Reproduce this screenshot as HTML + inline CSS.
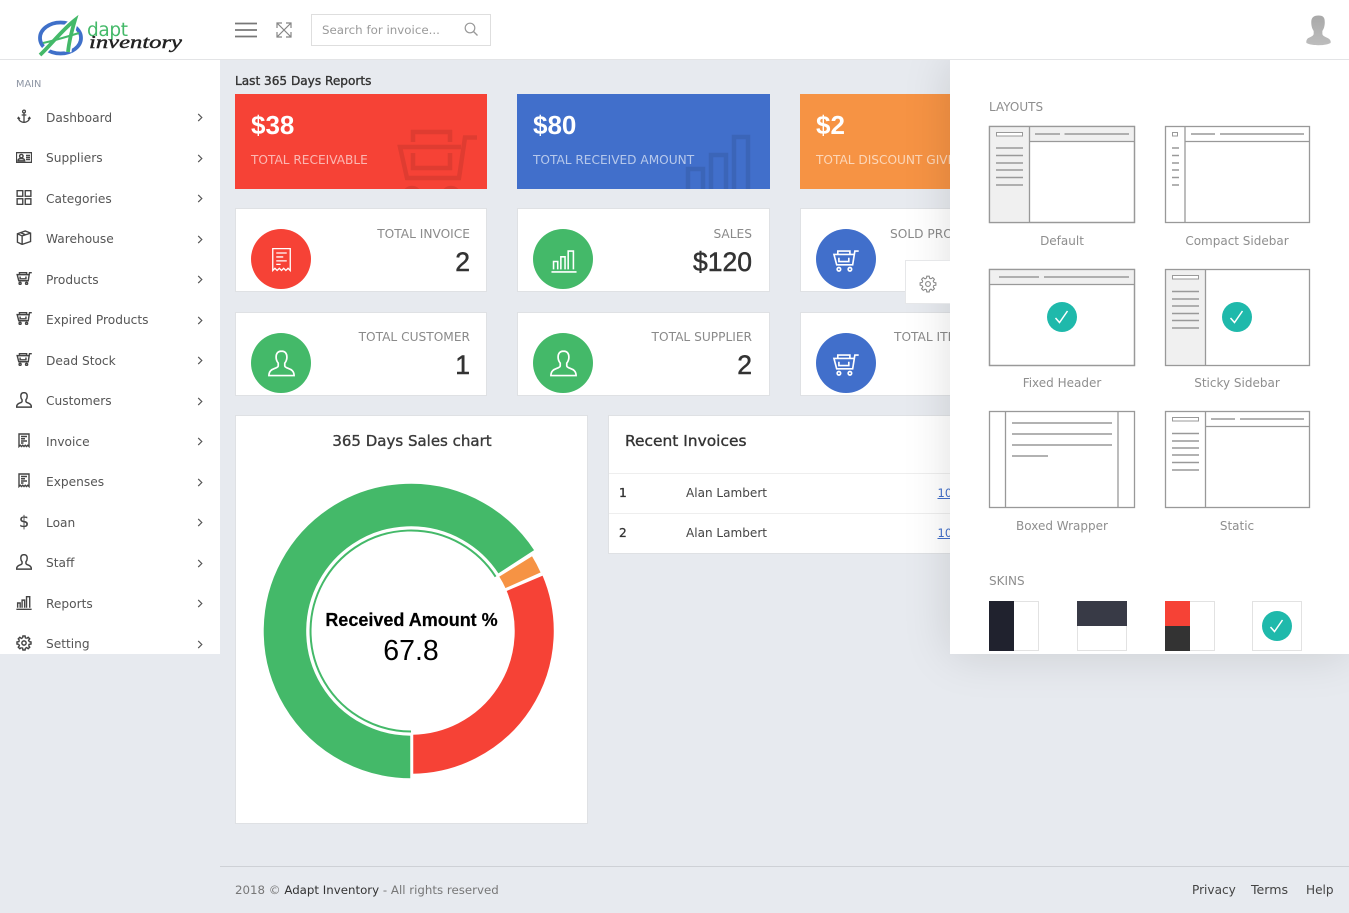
<!DOCTYPE html>
<html lang="en"><head><meta charset="utf-8"><title>Adapt Inventory</title>
<style>
html,body{margin:0;padding:0;width:1349px;height:913px;overflow:hidden;background:#e7eaef}
body{position:relative;font-family:"DejaVu Sans","Liberation Sans",sans-serif;font-size:12.2px;color:#555}
.a,.t{position:absolute}
.t{white-space:nowrap;line-height:20px;height:20px;margin-top:1px}
.r{text-align:right}
.c{text-align:center;width:200px}
.card{position:absolute;box-sizing:border-box;background:#fff;border:1px solid #dfe1e4;}
.solid{position:absolute;top:94px;height:95px;overflow:hidden}
.big{font:bold 26px/30px "Liberation Sans",sans-serif;color:#fff;position:absolute;left:16px;top:16px}
.lab{position:absolute;left:16px;top:56px;color:rgba(255,255,255,.62);white-space:nowrap;line-height:20px;font-size:12.15px}
.circ{position:absolute;width:60px;height:60px;border-radius:50%}
.ul{color:#8a8a8a;font-size:12.2px}
.num{font:26.5px/30px "Liberation Sans",sans-serif;color:#333;-webkit-text-stroke:.5px #333}
.nav{color:#555}
svg{display:block;overflow:visible}
.ic{position:absolute;fill:none;stroke:currentColor;stroke-width:1.5}
.nav .ic{stroke-width:2.2;color:#444}
.pl{color:#8e8e8e;font-size:12px}
</style></head><body>
<svg width="0" height="0" style="position:absolute">
<defs>
<symbol id="anchor" viewBox="0 0 24 24"><g fill="none" stroke="currentColor"><circle cx="12" cy="3.500" r="2.400"/><path d="M12 6v16M8 9.500h8M2.500 13.500c0 5 4 8.500 9.500 8.500s9.500-3.500 9.500-8.500M1 16l1.500-2.500L5 16M19 16l2.500-2.500L23 16"/></g></symbol>
<symbol id="idcard" viewBox="0 0 24 16"><g fill="none" stroke="currentColor"><rect x=".6" y=".6" width="22.800" height="14.800"/><circle cx="8" cy="6" r="2.600"/><path d="M3 13c0-2.500 2-3.500 5-3.500s5 1 5 3.500zM15 5h6M15 8h6M15 11h6"/></g></symbol>
<symbol id="grid" viewBox="0 0 24 24"><g fill="none" stroke="currentColor"><rect x="1" y="1" width="9" height="9"/><rect x="14" y="1" width="9" height="9"/><rect x="1" y="14" width="9" height="9"/><rect x="14" y="14" width="9" height="9"/></g></symbol>
<symbol id="box" viewBox="0 0 24 24"><g fill="none" stroke="currentColor"><path d="M1.500 6L14 1.500 22.500 5v13.500L9 23 1.500 19.500zM1.500 6L9 9.500 22.500 5M9 9.500V23M6 4l8 3.500"/></g></symbol>
<symbol id="cart" viewBox="0 0 24 20"><g fill="none" stroke="currentColor"><path d="M24 1h-3.500l-2 12.500H4L1.500 4H19.500M5 4V1h11v3M6 7v3.500h9V7"/><circle cx="6" cy="17.500" r="1.600"/><circle cx="16" cy="17.500" r="1.600"/></g></symbol>
<symbol id="user" viewBox="0 0 24 24"><path fill="none" stroke="currentColor" d="M12 1C8.700 1 7.200 3.200 7.200 6.300c0 2.300.8 4 1.900 5.400v2.300c0 1-1.100 1.700-3.200 2.400C3 17.400.9 18.800.8 22.700h22.400c-.1-3.900-2.200-5.300-5.100-6.300-2.100-.7-3.200-1.400-3.200-2.400v-2.300c1.100-1.400 1.900-3.100 1.900-5.400C16.800 3.200 15.300 1 12 1z"/></symbol>
<symbol id="receipt" viewBox="0 0 24 28"><g fill="none" stroke="currentColor"><path d="M2 1h20v25l-2.500-2.500L17 26l-2.500-2.500L12 26l-2.500-2.500L7 26l-2.500-2.500L2 26z"/><path d="M6 6h12M6 10.500h8M6 15h12M6 19h5"/></g></symbol>
<symbol id="chart" viewBox="0 0 24 22"><g fill="none" stroke="currentColor"><path d="M0 21h24M2 18.500V11h4v7.500M9 18.500V6.500h4v12M16 18.500V1h5v17.500"/></g></symbol>
<symbol id="gear" viewBox="0 0 24 24"><g fill="none" stroke="currentColor"><circle cx="12" cy="12" r="3.200"/>
<path d="M9.900 4.300L10.400 1.500H13.600L14.100 4.300L15.960 5.070"/>
<path transform="rotate(45 12 12)" d="M9.900 4.300L10.400 1.500H13.600L14.100 4.300L15.960 5.070"/>
<path transform="rotate(90 12 12)" d="M9.900 4.300L10.400 1.500H13.600L14.100 4.300L15.960 5.070"/>
<path transform="rotate(135 12 12)" d="M9.900 4.300L10.400 1.500H13.600L14.100 4.300L15.960 5.070"/>
<path transform="rotate(180 12 12)" d="M9.900 4.300L10.400 1.500H13.600L14.100 4.300L15.960 5.070"/>
<path transform="rotate(225 12 12)" d="M9.900 4.300L10.400 1.500H13.600L14.100 4.300L15.960 5.070"/>
<path transform="rotate(270 12 12)" d="M9.900 4.300L10.400 1.500H13.600L14.100 4.300L15.960 5.070"/>
<path transform="rotate(315 12 12)" d="M9.900 4.300L10.400 1.500H13.600L14.100 4.300L15.960 5.070"/></g></symbol>
<symbol id="chev" viewBox="0 0 6 10"><path fill="none" stroke="#555" stroke-width="1.300" d="M1 1l4 4-4 4"/></symbol>
</defs></svg>

<!-- main -->
<div class="t" style="left:235px;top:70px;color:#333;font-size:12.1px;-webkit-text-stroke:.35px #333">Last 365 Days Reports</div>

<div class="solid" style="left:235px;width:252px;background:#f64236">
<svg class="a" style="left:0;top:0" width="252" height="95"><g fill="none" stroke="#000" stroke-opacity=".09" stroke-width="4.500"><path d="M242 43.500h-12l-6 40.500h-52l-7-31h61M178 48V38h37v10M178 59v15h37V59"/><circle cx="177" cy="102" r="8"/><circle cx="216" cy="102" r="8"/></g></svg>
<div class="big">$38</div><div class="lab">TOTAL RECEIVABLE</div></div>
<div class="solid" style="left:517px;width:253px;background:#416fcb">
<svg class="a" style="left:0;top:0" width="253" height="95"><g fill="none" stroke="#000" stroke-opacity=".09" stroke-width="4.500"><path d="M171 97V75h15v22M194 97V61h15v36M217 97V43h14v54"/></g></svg>
<div class="big">$80</div><div class="lab">TOTAL RECEIVED AMOUNT</div></div>
<div class="solid" style="left:800px;width:253px;background:#f69344">
<div class="big">$2</div><div class="lab">TOTAL DISCOUNT GIVEN</div></div>

<div class="card" style="left:235px;top:208px;width:252px;height:84px"></div>
<div class="card" style="left:517px;top:208px;width:253px;height:84px"></div>
<div class="card" style="left:800px;top:208px;width:253px;height:84px"></div>
<div class="card" style="left:235px;top:312px;width:252px;height:84px"></div>
<div class="card" style="left:517px;top:312px;width:253px;height:84px"></div>
<div class="card" style="left:800px;top:312px;width:253px;height:84px"></div>

<div class="circ" style="left:251px;top:229px;background:#f64236"></div>
<svg class="ic" style="left:271px;top:247px;color:#fff" width="21" height="26"><use href="#receipt"/></svg>
<div class="circ" style="left:533px;top:229px;background:#44b969"></div>
<svg class="ic" style="left:551px;top:250px;color:#fff" width="26" height="23"><use href="#chart"/></svg>
<div class="circ" style="left:816px;top:229px;background:#416fcb"></div>
<svg class="ic" style="left:832px;top:250px;color:#fff" width="27" height="22"><use href="#cart"/></svg>
<div class="circ" style="left:251px;top:333px;background:#44b969"></div>
<svg class="ic" style="left:268px;top:350px;color:#fff" width="27" height="27"><use href="#user"/></svg>
<div class="circ" style="left:533px;top:333px;background:#44b969"></div>
<svg class="ic" style="left:550px;top:350px;color:#fff" width="27" height="27"><use href="#user"/></svg>
<div class="circ" style="left:816px;top:333px;background:#416fcb"></div>
<svg class="ic" style="left:832px;top:354px;color:#fff" width="27" height="22"><use href="#cart"/></svg>

<div class="t r ul" style="right:879px;top:223px">TOTAL INVOICE</div>
<div class="a r num" style="right:879px;top:247px">2</div>
<div class="t r ul" style="right:597px;top:223px">SALES</div>
<div class="a r num" style="right:597px;top:247px">$120</div>
<div class="t ul" style="left:890px;top:223px">SOLD PRODUCTS</div>
<div class="t r ul" style="right:879px;top:326px">TOTAL CUSTOMER</div>
<div class="a r num" style="right:879px;top:350px">1</div>
<div class="t r ul" style="right:597px;top:326px">TOTAL SUPPLIER</div>
<div class="a r num" style="right:597px;top:350px">2</div>
<div class="t ul" style="left:894px;top:326px">TOTAL ITEMS</div>

<!-- chart -->
<div class="card" style="left:235px;top:415px;width:353px;height:409px"></div>
<div class="t c" style="left:312px;top:430px;font-size:15px;color:#3a3a3a;-webkit-text-stroke:.35px #3a3a3a">365 Days Sales chart</div>
<svg class="a" style="left:0;top:0" width="700" height="800">
<path fill="#44b969" stroke="#fff" stroke-width="1.500" d="M411 779A148 148 0 1 1 535.100 550.400L498.200 574.400A104 104 0 1 0 411 735Z"/>
<path fill="#f69344" stroke="#fff" stroke-width="1.500" d="M532.300 555.200A143 143 0 0 1 541.600 572.800L505.100 589.100A103 103 0 0 0 498.300 576.400Z"/>
<path fill="#f64236" stroke="#fff" stroke-width="1.500" d="M543 574.700A143.500 143.500 0 0 1 412.500 774.500L412.500 734A103 103 0 0 0 505.700 590.600Z"/>
<path fill="none" stroke="#44b969" stroke-width="2" d="M411 731.500A100.500 100.500 0 1 1 495.600 576.700"/>
<text x="411.500" y="626" text-anchor="middle" font-family="Liberation Sans,sans-serif" font-weight="bold" font-size="18" stroke="#000" stroke-width=".2" fill="#000">Received Amount %</text>
<text x="411" y="660" text-anchor="middle" font-family="Liberation Sans,sans-serif" font-size="28.500" fill="#000">67.8</text>
</svg>

<!-- invoices -->
<div class="card" style="left:608px;top:415px;width:400px;height:139px"></div>
<div class="a" style="left:609px;top:473px;width:398px;height:1px;background:#eeeeee"></div>
<div class="a" style="left:609px;top:513px;width:398px;height:1px;background:#eeeeee"></div>
<div class="t" style="left:625px;top:430px;font-size:15.450px;color:#333;-webkit-text-stroke:.35px #333">Recent Invoices</div>
<div class="t" style="left:619px;top:482px;color:#333;-webkit-text-stroke:.3px #333">1</div>
<div class="t" style="left:686px;top:482px;color:#444;font-size:12.050px">Alan Lambert</div>
<div class="t" style="left:937.500px;top:482px;color:#416fcb;text-decoration:underline;font-size:11.500px">1001</div>
<div class="t" style="left:619px;top:522px;color:#333;-webkit-text-stroke:.3px #333">2</div>
<div class="t" style="left:686px;top:522px;color:#444;font-size:12.050px">Alan Lambert</div>
<div class="t" style="left:937.500px;top:522px;color:#416fcb;text-decoration:underline;font-size:11.500px">1002</div>

<!-- footer -->
<div class="a" style="left:220px;top:866px;width:1129px;height:1px;background:#ced1d6"></div>
<div class="t" style="left:235px;top:879px;color:#777;font-size:11.800px">2018 © <span style="color:#333">Adapt Inventory</span> - All rights reserved</div>
<div class="t" style="left:1192px;top:879px;color:#444;font-size:12.100px">Privacy</div>
<div class="t" style="left:1251px;top:879px;color:#444;font-size:12.600px">Terms</div>
<div class="t" style="left:1306px;top:879px;color:#444;font-size:12.100px">Help</div>

<!-- settings panel -->
<div class="a" style="left:950px;top:60px;width:399px;height:594px;background:#fff;box-shadow:0 0 45px rgba(0,0,0,.13);clip-path:inset(0 0 -70px -70px)"></div>
<div class="a" style="left:905px;top:260px;width:45px;height:44px;box-sizing:border-box;background:#fff;border:1px solid #e6e7e9;border-right:0"></div>
<svg class="ic" style="left:919px;top:275px;color:#8a8a8a" width="18" height="18"><use href="#gear"/></svg>
<div class="t pl" style="left:989px;top:96px;">LAYOUTS</div>
<div class="t pl c" style="left:962px;top:230px">Default</div>
<div class="t pl c" style="left:1137px;top:230px">Compact Sidebar</div>
<div class="t pl c" style="left:962px;top:372px">Fixed Header</div>
<div class="t pl c" style="left:1137px;top:372px">Sticky Sidebar</div>
<div class="t pl c" style="left:962px;top:515px">Boxed Wrapper</div>
<div class="t pl c" style="left:1137px;top:515px">Static</div>
<div class="t pl" style="left:989px;top:570px;">SKINS</div>
<svg class="a" style="left:950px;top:60px" width="399" height="594" viewBox="950 60 399 594">
<g fill="none" stroke="#999" stroke-width="1.300">
<rect x="989.500" y="126.500" width="145" height="96" fill="#fff"/>
<path d="M990 127h39.500v95H990z" fill="#f0f0f0" stroke="none"/><path d="M1029.500 127h105v14h-105z" fill="#f0f0f0" stroke="none"/>
<rect x="989.500" y="126.500" width="145" height="96"/>
<path d="M1029.500 127v95M1029.500 141.500h105"/>
<rect x="996.500" y="132.500" width="26" height="3.500" fill="#fff" stroke-width="1"/>
<path stroke-width="1.500" d="M996 148h27M996 155.500h27M996 163h27M996 170h27M996 177.500h27M996 185h27M1035 134h25M1064.500 134h64.500"/>
<rect x="1165.500" y="126.500" width="144" height="96"/>
<path d="M1185 127v95M1185 141.500h124"/>
<rect x="1172.500" y="132.500" width="5" height="3.500" stroke-width="1"/>
<path stroke-width="1.500" d="M1172 148h7M1172 155.500h7M1172 163h7M1172 170h7M1172 177.500h7M1172 185h7M1191 134h24M1220 134h84"/>
<rect x="989.500" y="269.500" width="145" height="96"/>
<path d="M990 270h144v14h-144z" fill="#f0f0f0" stroke="none"/>
<rect x="989.500" y="269.500" width="145" height="96"/>
<path d="M990 284.500h144"/>
<path stroke-width="1.500" d="M999 277h40M1044 277h85"/>
<path d="M1166 270h39v95h-39z" fill="#f0f0f0" stroke="none"/>
<rect x="1165.500" y="269.500" width="144" height="96"/>
<path d="M1205.500 270v95"/>
<rect x="1172.500" y="275.500" width="26" height="3.500" fill="#fff" stroke-width="1"/>
<path stroke-width="1.500" d="M1172 291.500h27M1172 299h27M1172 306h27M1172 313.500h27M1172 320.500h27M1172 328h27"/>
<rect x="989.500" y="411.500" width="145" height="96"/>
<path d="M1005.500 412v95M1118 412v95"/>
<path stroke-width="1.500" d="M1012 423h100M1012 434h100M1012 445h100M1012 456h36"/>
<rect x="1165.500" y="411.500" width="144" height="96"/>
<path d="M1205.500 412v95M1205.500 426.500h104"/>
<rect x="1172.500" y="417.500" width="26" height="3.500" stroke-width="1"/>
<path stroke-width="1.500" d="M1172 433.500h27M1172 441h27M1172 448h27M1172 455h27M1172 462.500h27M1172 470h27M1211 419h24M1240 419h64"/>
</g>
<circle cx="1062" cy="317" r="15" fill="#1fb9ab"/><path d="M1055.500 318l4 4.500 8-11.500" fill="none" stroke="#fff" stroke-width="1.500"/>
<circle cx="1237" cy="317" r="15" fill="#1fb9ab"/><path d="M1230.500 318l4 4.500 8-11.500" fill="none" stroke="#fff" stroke-width="1.500"/>
<rect x="989.500" y="601.500" width="49" height="49" fill="#fff" stroke="#e2e2e2"/>
<rect x="989" y="601" width="25" height="50" fill="#20222e"/>
<rect x="1077.500" y="601.500" width="49" height="49" fill="#fff" stroke="#e2e2e2"/>
<rect x="1077" y="601" width="50" height="25" fill="#383a46"/>
<rect x="1165.500" y="601.500" width="49" height="49" fill="#fff" stroke="#e2e2e2"/>
<rect x="1165" y="601" width="25" height="25" fill="#f64236"/><rect x="1165" y="626" width="25" height="25" fill="#333"/>
<rect x="1252.500" y="601.500" width="49" height="49" fill="#fff" stroke="#e2e2e2"/>
<circle cx="1277" cy="626" r="15" fill="#1fb9ab"/><path d="M1270.500 627l4 4.500 8-11.500" fill="none" stroke="#fff" stroke-width="1.500"/>
</svg>

<!-- header -->
<div class="a" style="left:0;top:0;width:1349px;height:59px;background:#fff;border-bottom:1px solid #e3e4e6"></div>
<svg class="a" style="left:0;top:0" width="200" height="60">
<ellipse cx="60.500" cy="38" rx="20.500" ry="15.500" fill="none" stroke="#3f70c9" stroke-width="3.800"/>
<path d="M40 55C50 46 62 30 75 20C72 30 69 42 68 52" fill="none" stroke="#fff" stroke-width="7"/>
<path d="M40 55C50 46 62 30 75 20C72 30 69 42 68 52" fill="none" stroke="#44b969" stroke-width="3.800"/>
<path d="M43 43C53 41 66 37 79 33" fill="none" stroke="#44b969" stroke-width="2"/>
<text x="87" y="36" font-family="DejaVu Sans,sans-serif" font-size="18.500" fill="#44b969" textLength="41">dapt</text>
<text x="89" y="48" font-family="Liberation Serif,serif" font-style="italic" font-size="18" fill="#222" stroke="#222" stroke-width=".4" textLength="93" lengthAdjust="spacingAndGlyphs">inventory</text>
<path d="M235 23.500h22M235 30h22M235 36.500h22" stroke="#777" stroke-width="1.800"/>
</svg>
<svg class="a" style="left:276px;top:22px" width="16" height="16" viewBox="0 0 16 16"><path fill="none" stroke="#858585" stroke-width="1.200" d="M1 1l14 14M15 1L1 15M1 6V1h5M10 1h5v5M1 10v5h5M10 15h5v-5"/></svg>
<div class="a" style="left:311px;top:14px;width:178px;height:30px;border:1px solid #dedede;background:#fff"></div>
<div class="t" style="left:322px;top:19px;color:#9a9a9a;font-size:11.850px">Search for invoice...</div>
<svg class="a" style="left:464px;top:22px" width="15" height="15" viewBox="0 0 15 15"><circle cx="6" cy="6" r="4.800" fill="none" stroke="#999" stroke-width="1.200"/><path d="M9.500 9.500l4 4" stroke="#999" stroke-width="1.300"/></svg>
<svg class="a" style="left:1305px;top:14px" width="27" height="32" viewBox="0 0 28 32"><defs><linearGradient id="av" x1="0" y1="0" x2="0" y2="1"><stop offset="0" stop-color="#a8a8a8"/><stop offset="1" stop-color="#bdbdbd"/></linearGradient></defs><path fill="url(#av)" d="M14 1c-5 0-7.500 2-7.500 7 0 4 1 7 2.500 9v3c0 2-3 3-6 4.500C1.500 26 1 28 1.500 29.500c3 1.500 7 2.300 12.500 2.300s9.500-.8 12.500-2.300C27 28 26.500 26 24 24.500c-3-1.500-6-2.500-6-4.500v-3c1.500-2 2.500-5 2.500-9 0-5-1.500-7-6.500-7z"/></svg>

<!-- sidebar -->
<div class="a" style="left:0;top:60px;width:220px;height:594px;background:#fff"></div>
<div class="t" style="left:16px;top:74px;font-size:9.800px;color:#8d95a3">MAIN</div>
<div class="nav">
<svg class="ic" style="left:17px;top:109px" width="14" height="15"><use href="#anchor"/></svg><div class="t" style="left:46px;top:107px">Dashboard</div><svg class="ic" style="left:197px;top:113px" width="6" height="9"><use href="#chev"/></svg>
<svg class="ic" style="left:16px;top:152px" width="16" height="11"><use href="#idcard"/></svg><div class="t" style="left:46px;top:147px">Suppliers</div><svg class="ic" style="left:197px;top:154px" width="6" height="9"><use href="#chev"/></svg>
<svg class="ic" style="left:16px;top:190px" width="16" height="15"><use href="#grid"/></svg><div class="t" style="left:46px;top:188px">Categories</div><svg class="ic" style="left:197px;top:194px" width="6" height="9"><use href="#chev"/></svg>
<svg class="ic" style="left:16px;top:230px" width="16" height="15"><use href="#box"/></svg><div class="t" style="left:46px;top:228px">Warehouse</div><svg class="ic" style="left:197px;top:235px" width="6" height="9"><use href="#chev"/></svg>
<svg class="ic" style="left:16px;top:272px" width="16" height="13"><use href="#cart"/></svg><div class="t" style="left:46px;top:269px">Products</div><svg class="ic" style="left:197px;top:275px" width="6" height="9"><use href="#chev"/></svg>
<svg class="ic" style="left:16px;top:312px" width="16" height="13"><use href="#cart"/></svg><div class="t" style="left:46px;top:309px">Expired Products</div><svg class="ic" style="left:197px;top:316px" width="6" height="9"><use href="#chev"/></svg>
<svg class="ic" style="left:16px;top:353px" width="16" height="13"><use href="#cart"/></svg><div class="t" style="left:46px;top:350px">Dead Stock</div><svg class="ic" style="left:197px;top:356px" width="6" height="9"><use href="#chev"/></svg>
<svg class="ic" style="left:16px;top:392px" width="16" height="16"><use href="#user"/></svg><div class="t" style="left:46px;top:390px">Customers</div><svg class="ic" style="left:197px;top:397px" width="6" height="9"><use href="#chev"/></svg>
<svg class="ic" style="left:18px;top:433px;stroke-width:2.800" width="12" height="15"><use href="#receipt"/></svg><div class="t" style="left:46px;top:431px">Invoice</div><svg class="ic" style="left:197px;top:437px" width="6" height="9"><use href="#chev"/></svg>
<svg class="ic" style="left:18px;top:473px;stroke-width:2.800" width="12" height="15"><use href="#receipt"/></svg><div class="t" style="left:46px;top:471px">Expenses</div><svg class="ic" style="left:197px;top:478px" width="6" height="9"><use href="#chev"/></svg>
<div class="t" style="left:19px;top:511px;font-size:16px;color:#444;-webkit-text-stroke:.2px #444">$</div><div class="t" style="left:46px;top:512px">Loan</div><svg class="ic" style="left:197px;top:518px" width="6" height="9"><use href="#chev"/></svg>
<svg class="ic" style="left:16px;top:554px" width="16" height="16"><use href="#user"/></svg><div class="t" style="left:46px;top:552px">Staff</div><svg class="ic" style="left:197px;top:559px" width="6" height="9"><use href="#chev"/></svg>
<svg class="ic" style="left:16px;top:596px" width="16" height="14"><use href="#chart"/></svg><div class="t" style="left:46px;top:593px">Reports</div><svg class="ic" style="left:197px;top:599px" width="6" height="9"><use href="#chev"/></svg>
<svg class="ic" style="left:16px;top:635px" width="16" height="16"><use href="#gear"/></svg><div class="t" style="left:46px;top:633px">Setting</div><svg class="ic" style="left:197px;top:640px" width="6" height="9"><use href="#chev"/></svg>
</div>
</body></html>
